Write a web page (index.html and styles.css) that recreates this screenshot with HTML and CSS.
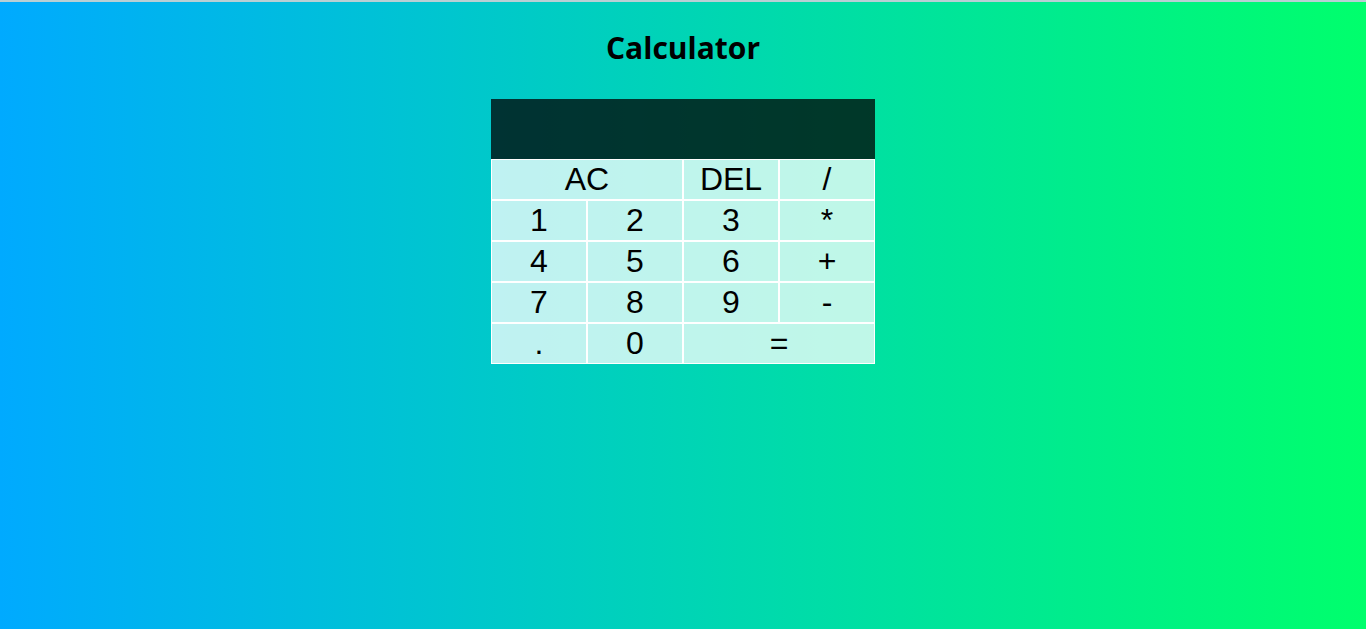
FILE: index.html
```html
<!DOCTYPE html>
<html lang="en">
<head>
<meta charset="utf-8">
<title>Calculator</title>
<link rel="stylesheet" href="styles.css">
</head>
<body>
<main class="page">
  <h1 class="title">Calculator</h1>
  <div class="calculator">
    <div class="output"></div>
    <button class="key span-two">AC</button>
    <button class="key">DEL</button>
    <button class="key">/</button>
    <button class="key">1</button>
    <button class="key">2</button>
    <button class="key">3</button>
    <button class="key">*</button>
    <button class="key">4</button>
    <button class="key">5</button>
    <button class="key">6</button>
    <button class="key">+</button>
    <button class="key">7</button>
    <button class="key">8</button>
    <button class="key">9</button>
    <button class="key">-</button>
    <button class="key">.</button>
    <button class="key">0</button>
    <button class="key span-two">=</button>
  </div>
</main>
</body>
</html>
```
FILE: styles.css
```css
* { box-sizing: border-box; }
html, body { margin: 0; padding: 0; }
body {
  min-height: 100vh;
  background: linear-gradient(to right, #00aaff, #00ff6c);
  border-top: 2px solid #b9cfd4;
}
.page {
  display: flex;
  flex-direction: column;
  align-items: center;
}
.title {
  font-family: "Open Sans", "Noto Sans", sans-serif;
  font-weight: 700;
  font-size: 30px;
  line-height: 36px;
  margin: 28px 0 33px;
  color: #000;
}
.calculator {
  display: grid;
  grid-template-columns: repeat(4, 96px);
  grid-template-rows: 60px repeat(5, 41px);
}
.output {
  grid-column: 1 / -1;
  background: rgba(0, 0, 0, 0.75);
}
.key {
  font-family: "Liberation Sans", Arial, sans-serif;
  font-size: 32px;
  line-height: 37px;
  padding: 0;
  border: 1px solid #fff;
  background: rgba(255, 255, 255, 0.75);
  color: #000;
  cursor: pointer;
}
.span-two { grid-column: span 2; }
```
